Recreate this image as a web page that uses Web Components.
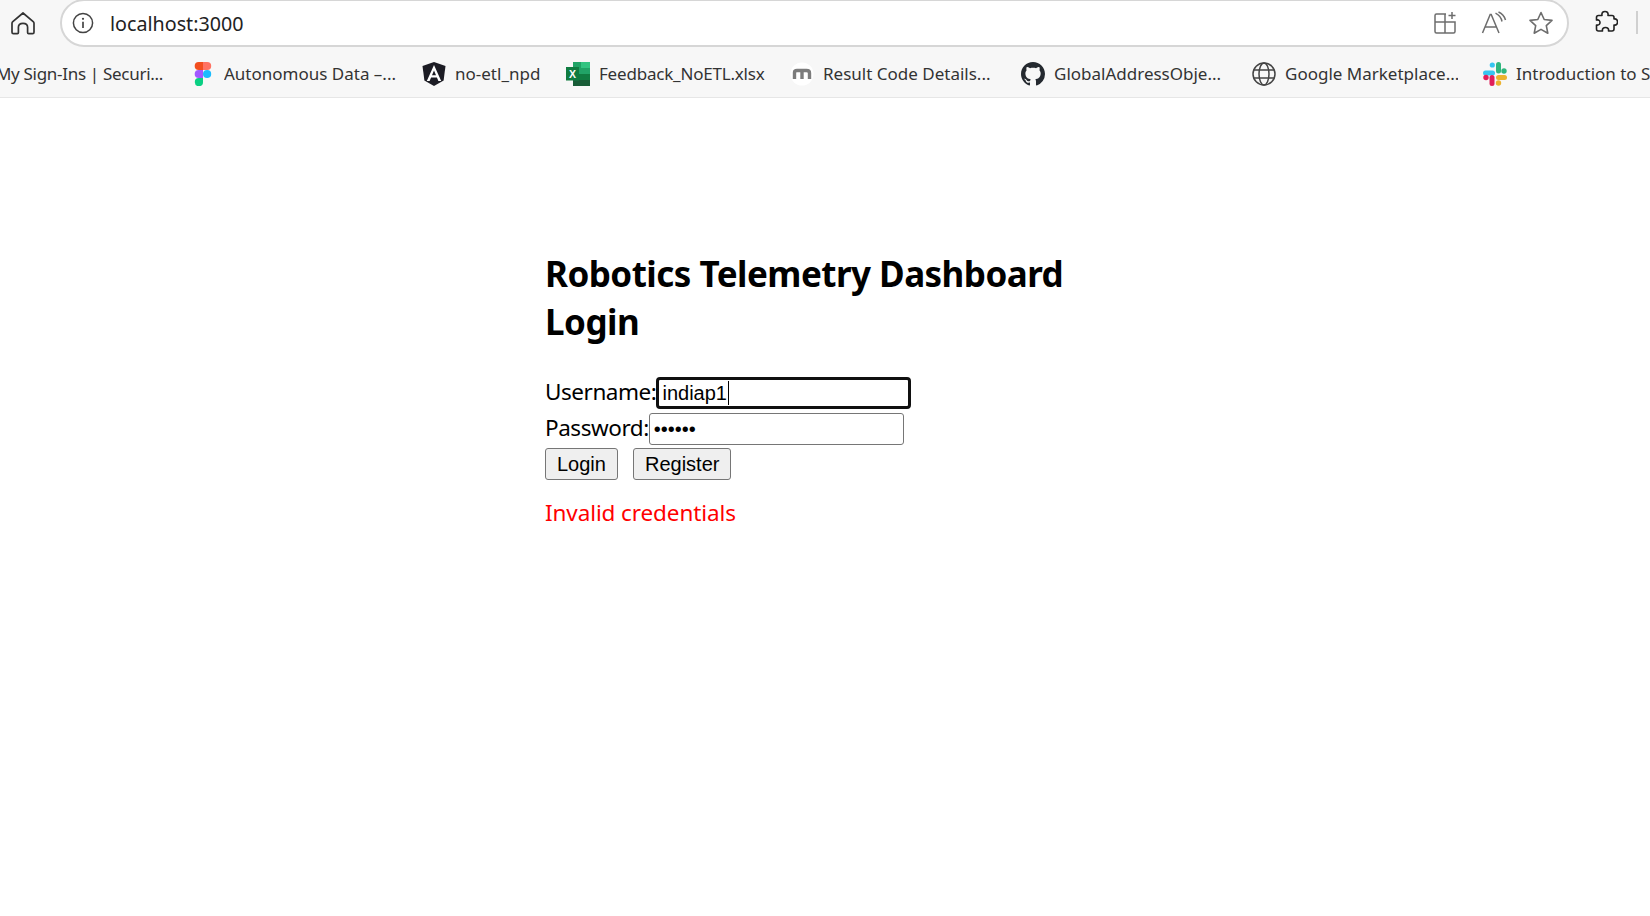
<!DOCTYPE html>
<html lang="en"><head><meta charset="utf-8"><title>localhost:3000</title>
<style>html,body{margin:0;padding:0;background:#fff;height:100%;overflow:hidden}body{display:flex;flex-direction:column;height:916px;width:1650px}</style>
</head><body>
<browser-toolbar></browser-toolbar>
<bookmark-bar>
<bookmark-item style="--w:163px;--ls:-.3px;margin-right:3px" label="My Sign-Ins | Securi..." kind="none"></bookmark-item>
<bookmark-item style="--w:173px" label="Autonomous Data –..." kind="figma"></bookmark-item>
<bookmark-item style="--w:86px" label="no-etl_npd" kind="angular"></bookmark-item>
<bookmark-item style="--w:166px;--ls:-.2px" label="Feedback_NoETL.xlsx" kind="excel"></bookmark-item>
<bookmark-item style="--w:173px" label="Result Code Details..." kind="m"></bookmark-item>
<bookmark-item style="--w:173px" label="GlobalAddressObje..." kind="github"></bookmark-item>
<bookmark-item style="--w:173px" label="Google Marketplace..." kind="globe"></bookmark-item>
<bookmark-item style="--w:200px" label="Introduction to S" kind="slack"></bookmark-item>
</bookmark-bar>
<login-page></login-page>
<script>
const F='"Noto Sans","Open Sans",sans-serif';
class BrowserToolbar extends HTMLElement{constructor(){super();this.attachShadow({mode:'open'}).innerHTML=`<style>
:host{display:flex;align-items:flex-start;height:47px;background:#f7f7f7;flex:none;box-sizing:border-box}
.home{width:46px;height:46px;display:flex;align-items:center;justify-content:center;flex:none}
.pill{margin-left:14px;width:1509px;height:48px;box-sizing:border-box;background:#fff;border:2px solid #d6d6d6;border-radius:24px;display:flex;align-items:center;flex:none;margin-top:-1px}
.info{margin-left:9px;width:24px;height:24px;flex:none}
.url{margin-left:15px;padding-top:2px;font:400 19.7px/1 ${F};color:#222;flex:1;white-space:nowrap}
.r{display:flex;align-items:center;margin-right:13px}
.r svg{display:block}
.ext{margin-left:25px;flex:none;margin-top:10px;display:block}
.sep{margin-left:18px;width:2px;height:23px;background:#d0d0d0;margin-top:11px;flex:none}
</style>
<div class="home"><svg width="26" height="26" viewBox="0 0 26 26" fill="none" stroke="#333" stroke-width="1.7" stroke-linejoin="round"><path d="M13 3 L23.2 11.6 Q24 12.3 24 13.2 V22.2 Q24 23.6 22.6 23.6 H18.6 Q17.6 23.6 17.6 22.4 V17.2 Q17.6 13.3 13 13.3 Q8.4 13.3 8.4 17.2 V22.4 Q8.4 23.6 7.4 23.6 H3.4 Q2 23.6 2 22.2 V13.2 Q2 12.3 2.8 11.6 Z"/></svg></div>
<div class="pill">
<svg class="info" viewBox="0 0 24 24" fill="none"><circle cx="12" cy="12" r="9.6" stroke="#444" stroke-width="1.5"/><path d="M12 10.8V17" stroke="#444" stroke-width="1.7"/><circle cx="12" cy="7.8" r="1.1" fill="#444"/></svg>
<span class="url">localhost:3000</span>
<div class="r">
<svg width="24" height="24" viewBox="0 0 24 24" fill="none" stroke="#6d6d6d" stroke-width="1.5"><path d="M13 3H3.5Q2 3 2 4.5V20.5Q2 22 3.5 22H20.5Q22 22 22 20.5V11H2M12 3V22"/><path d="M19 1V8M15.5 4.5H22.5"/></svg>
<svg width="26" height="24" viewBox="0 0 26 24" fill="none" stroke="#6d6d6d" stroke-width="1.5" style="margin-left:24px"><path d="M1.5 22L9.2 3.5H10.2L18 22M4.5 16H15"/><path d="M14.5 2.2Q20 5 21 10.5M17.5 1Q23 3.5 24.5 9"/></svg>
<svg width="26" height="26" viewBox="0 0 26 26" fill="none" stroke="#6d6d6d" stroke-width="1.6" stroke-linejoin="round" style="margin-left:21px"><path d="M13 2.5L16.2 9.5L24 10.4L18.3 15.6L19.8 23.2L13 19.4L6.2 23.2L7.7 15.6L2 10.4L9.8 9.5Z"/></svg>
</div></div>
<svg class="ext" width="24" height="24" viewBox="0 0 24 24" fill="none" stroke="#222" stroke-width="1.6" stroke-linejoin="round"><path d="M8 5.5C7.5 2.5 9 1.5 11 1.5S14.5 2.5 14 5.5H18Q20 5.5 20 7.5V9C22.5 8.5 23.5 10 23.5 12S22.5 15.5 20 15V19Q20 21 18 21H14.5C15 18.5 13.5 17.5 11.5 17.5S8 18.5 8.5 21H4.5Q2.5 21 2.5 19V15C5 15.5 6 14 6 12.5S5 9.5 2.5 10V7.5Q2.5 5.5 4.5 5.5Z"/></svg>
<div class="sep"></div>`}}
customElements.define('browser-toolbar',BrowserToolbar);
class BookmarkBar extends HTMLElement{constructor(){super();this.attachShadow({mode:'open'}).innerHTML=`<style>
:host{display:flex;align-items:center;height:51px;box-sizing:border-box;background:#f7f7f7;border-bottom:1px solid #e6e6e6;flex:none;overflow:hidden;padding-top:4px;gap:25px}
</style><slot></slot>`}}
customElements.define('bookmark-bar',BookmarkBar);
const ICONS={none:'',
figma:`<svg width="24" height="24" viewBox="0 0 24 24"><g transform="translate(3.5,0)"><path d="M4.2 0H8.5V8H4.2A4 4 0 0 1 4.2 0Z" fill="#f24e1e"/><path d="M8.5 0H12.7A4 4 0 0 1 12.7 8H8.5Z" fill="#ff7262"/><path d="M4.2 8H8.5V16H4.2A4 4 0 0 1 4.2 8Z" fill="#a259ff"/><circle cx="12.6" cy="12" r="4.1" fill="#1abcfe"/><path d="M4.2 16H8.5V20A4.1 4.1 0 1 1 4.2 16Z" fill="#0acf83"/></g></svg>`,
angular:`<svg width="24" height="24" viewBox="0 0 24 24"><path d="M12 0L.5 3.9L2.4 18.4L12 24L21.6 18.4L23.5 3.9Z" fill="#1c1c24"/><path d="M12 3L4.8 19H7.6L9.1 15.4H14.9L16.4 19H19.2ZM12 8.6L14 13.2H10Z" fill="#fff" fill-rule="evenodd"/></svg>`,
excel:`<svg width="24" height="24" viewBox="0 0 24 24"><path d="M7 0H24V6H7Z" fill="#33c481"/><path d="M15 6H24V12H15Z" fill="#21a366"/><path d="M7 0H15V12H7Z" fill="#21a366"/><path d="M7 12H15V24H7Z" fill="#107c41"/><path d="M15 12H24V18H15Z" fill="#107c41"/><path d="M7 18H24V24H7Z" fill="#185c37"/><rect x="0" y="5" width="13" height="13.5" fill="#107c41"/><text x="6.5" y="15.6" text-anchor="middle" font-family="Liberation Sans" font-size="10.5" font-weight="700" fill="#fff">X</text></svg>`,
m:`<svg width="24" height="24" viewBox="0 0 24 24"><circle cx="12" cy="12" r="11.5" fill="#fff"/><path d="M4.5 17V10.5Q4.5 8.5 7 8.5H16.5Q19.5 8.5 19.5 11V17M12 17V9" fill="none" stroke="#7c7c7c" stroke-width="3.4"/></svg>`,
github:`<svg width="24" height="24" viewBox="0 0 16 16"><path fill="#24292f" d="M8 0C3.58 0 0 3.58 0 8c0 3.54 2.29 6.53 5.47 7.59.4.07.55-.17.55-.38 0-.19-.01-.82-.01-1.49-2.01.37-2.53-.49-2.69-.94-.09-.23-.48-.94-.82-1.13-.28-.15-.68-.52-.01-.53.63-.01 1.08.58 1.23.82.72 1.21 1.87.87 2.33.66.07-.52.28-.87.51-1.07-1.78-.2-3.64-.89-3.64-3.95 0-.87.31-1.59.82-2.15-.08-.2-.36-1.02.08-2.12 0 0 .67-.21 2.2.82.64-.18 1.32-.27 2-.27s1.36.09 2 .27c1.53-1.04 2.2-.82 2.2-.82.44 1.1.16 1.92.08 2.12.51.56.82 1.27.82 2.15 0 3.07-1.87 3.75-3.65 3.95.29.25.54.73.54 1.48 0 1.07-.01 1.93-.01 2.2 0 .21.15.46.55.38A8.01 8.01 0 0 0 16 8c0-4.42-3.58-8-8-8z"/></svg>`,
globe:`<svg width="24" height="24" viewBox="0 0 24 24" fill="none" stroke="#444" stroke-width="1.5"><circle cx="12" cy="12" r="11"/><ellipse cx="12" cy="12" rx="5" ry="11"/><path d="M1.8 8H22.2M1.8 16H22.2"/></svg>`,
slack:`<svg width="24" height="24" viewBox="0 0 24 24"><rect x="0" y="8.5" width="12" height="5" rx="2.5" fill="#36c5f0"/><circle cx="9.3" cy="3" r="2.6" fill="#36c5f0"/><rect x="13" y="0" width="5" height="11.5" rx="2.5" fill="#2eb67d"/><circle cx="21" cy="9" r="2.7" fill="#2eb67d"/><rect x="13" y="13" width="11" height="5" rx="2.5" fill="#ecb22e"/><circle cx="15.5" cy="21" r="2.7" fill="#ecb22e"/><rect x="6.5" y="13" width="5" height="11" rx="2.5" fill="#e01e5a"/><circle cx="3" cy="15.5" r="2.7" fill="#e01e5a"/></svg>`};
class BookmarkItem extends HTMLElement{connectedCallback(){if(this.shadowRoot)return;const k=this.getAttribute('kind');this.attachShadow({mode:'open'}).innerHTML=`<style>
:host{display:flex;align-items:center;gap:9px;flex:none}
svg{display:block;flex:none}
.t{display:block;font:400 17px/24px ${F};letter-spacing:var(--ls,0);color:#333;white-space:nowrap;width:var(--w);flex:none;overflow:hidden}
.c{display:flex;justify-content:flex-end}
</style>${ICONS[k]}<span class="t ${k==='none'?'c':''}"><span style="flex:none">${this.getAttribute('label')}</span></span>`}}
customElements.define('bookmark-item',BookmarkItem);
class LoginPage extends HTMLElement{constructor(){super();this.attachShadow({mode:'open'}).innerHTML=`<style>
:host{display:flex;flex-direction:column;align-items:flex-start;flex:1;padding:152px 0 0 545px;background:#fff;color:#000;font:400 22.5px/1 ${F}}
h1{font:700 35px/48px ${F};letter-spacing:-.53px;margin:0 0 31px;width:560px}
.row{display:flex;height:35.5px;align-items:flex-start;white-space:nowrap}
.l{line-height:30px;letter-spacing:-.45px}
.f{box-sizing:border-box;width:255px;height:32px;background:#fff;border:1px solid #767676;border-radius:3px;font:400 20px/30px "Liberation Sans",sans-serif;padding-left:4px;display:flex;align-items:center;color:#000;letter-spacing:0}
.f.on{border:3px solid #101010;border-radius:4px;padding-left:3px}
.caret{display:inline-block;width:1px;height:24px;background:#000;margin-left:1px}
.b{display:flex;gap:15px;height:32px}
button{box-sizing:border-box;height:32px;padding:0 11px;font:400 20px/1 "Liberation Sans",sans-serif;background:#efefef;color:#000;border:1px solid #767676;border-radius:3px;margin:0}
.err{color:#f00;margin-top:17px;line-height:32px;letter-spacing:-.1px}
</style>
<h1>Robotics Telemetry Dashboard<br>Login</h1>
<div class="row"><span class="l">Username:</span><div class="f on" role="textbox"><span>indiap1</span><i class="caret"></i></div></div>
<div class="row"><span class="l">Password:</span><div class="f" role="textbox"><span>••••••</span></div></div>
<div class="b"><button>Login</button><button>Register</button></div>
<div class="err">Invalid credentials</div>`}}
customElements.define('login-page',LoginPage);
</script>
</body></html>
